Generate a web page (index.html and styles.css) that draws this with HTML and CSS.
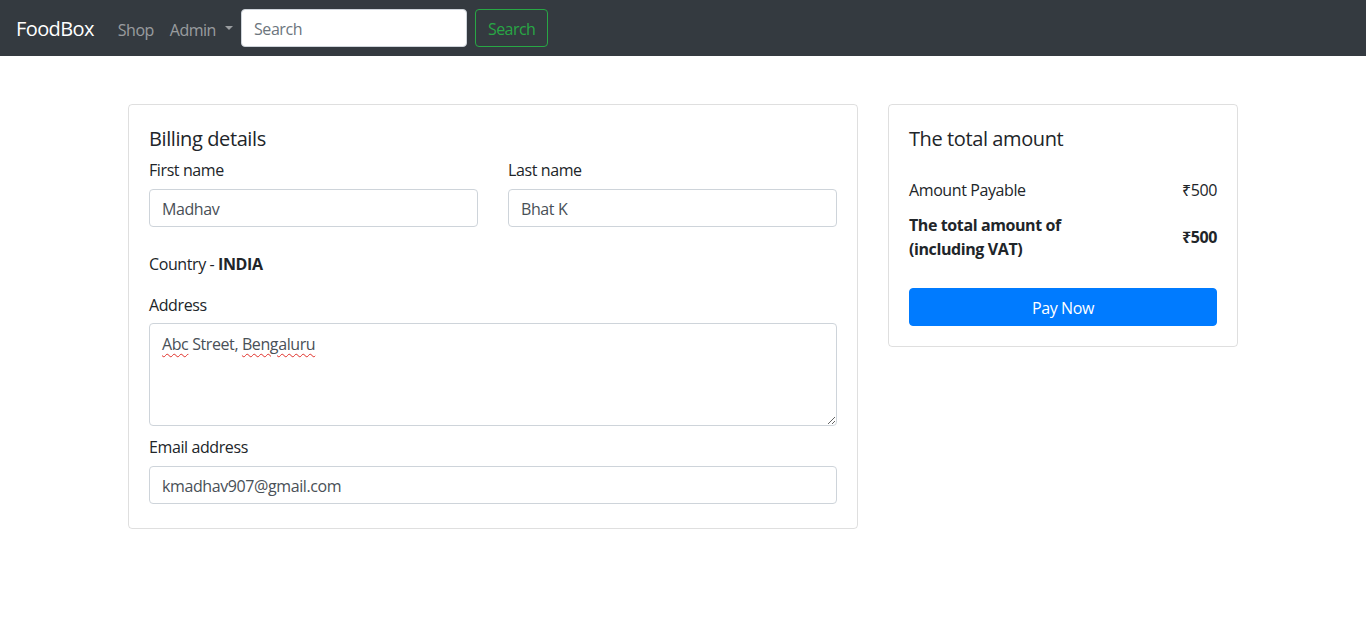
FILE: index.html
```html
<!DOCTYPE html>
<html lang="en">
<head>
<meta charset="utf-8">
<title>FoodBox - Checkout</title>
<link rel="stylesheet" href="styles.css">
</head>
<body>
<nav class="navbar">
  <a class="brand" href="#">FoodBox</a>
  <ul class="nav">
    <li><a class="nav-link" href="#">Shop</a></li>
    <li><a class="nav-link dropdown" href="#">Admin<span class="caret"></span></a></li>
  </ul>
  <form class="search">
    <input class="search-input" type="text" placeholder="Search">
    <button class="btn-outline" type="button">Search</button>
  </form>
</nav>

<main class="container">
  <section class="card billing">
    <h5 class="card-title">Billing details</h5>
    <div class="row">
      <div class="field">
        <label class="label">First name</label>
        <input class="control" type="text" value="Madhav">
      </div>
      <div class="field">
        <label class="label">Last name</label>
        <input class="control" type="text" value="Bhat K">
      </div>
    </div>
    <p class="country">Country - <b>INDIA</b></p>
    <label class="label">Address</label>
    <div class="control textarea"><span class="typo">Abc</span> Street, <span class="typo">Bengaluru</span></div>
    <label class="label email-label">Email address</label>
    <input class="control" type="text" value="kmadhav907@gmail.com">
  </section>

  <aside class="card summary">
    <h5 class="card-title">The total amount</h5>
    <div class="line">
      <span>Amount Payable</span>
      <span>₹500</span>
    </div>
    <div class="line total">
      <span>The total amount of<br>(including VAT)</span>
      <span>₹500</span>
    </div>
    <button class="btn-primary" type="button">Pay Now</button>
  </aside>
</main>
</body>
</html>
```

FILE: styles.css
```css
* { box-sizing: border-box; }

html, body {
  margin: 0;
  background: #fff;
  font-family: "Open Sans", "Noto Sans", sans-serif;
  font-size: 16px;
  line-height: 24px;
  color: #212529;
}

.navbar {
  display: flex;
  align-items: center;
  height: 56px;
  padding: 0 16px;
  background: #343a40;
}

.brand {
  color: #fff;
  text-decoration: none;
  font-size: 20px;
  letter-spacing: -0.6px;
  margin-right: 16px;
  padding-top: 2px;
}

.nav {
  display: flex;
  list-style: none;
  margin: 0;
  padding: 0;
}

.nav-link {
  display: flex;
  align-items: center;
  padding: 10px 8px 6px;
  color: rgba(255, 255, 255, 0.5);
  text-decoration: none;
  letter-spacing: -0.5px;
}

.caret {
  display: inline-block;
  margin-left: 9px;
  border-top: 4.5px solid rgba(255, 255, 255, 0.5);
  border-left: 4px solid transparent;
  border-right: 4px solid transparent;
  transform: translateY(-2px);
}

.search {
  display: flex;
  align-items: center;
}

.search-input {
  width: 226px;
  height: 38px;
  padding: 7px 12px 5px;
  font: inherit;
  letter-spacing: -0.4px;
  color: #495057;
  border: 1px solid #ced4da;
  border-radius: 4px;
  background: #fff;
  margin-right: 8px;
}
.search-input::placeholder { color: #6c757d; }

.btn-outline {
  height: 38px;
  padding: 7px 12px 5px;
  font: inherit;
  letter-spacing: -0.55px;
  color: #28a745;
  background: transparent;
  border: 1px solid #28a745;
  border-radius: 4px;
}

.container {
  display: flex;
  align-items: flex-start;
  gap: 30px;
  width: 1110px;
  margin: 48px auto 0;
}

.card {
  border: 1px solid rgba(0, 0, 0, 0.125);
  border-radius: 4px;
  padding: 20px;
  letter-spacing: -0.4px;
}

.billing {
  width: 730px;
  padding-bottom: 24px;
}

.summary {
  width: 350px;
}

.card-title {
  margin: 0 0 6px;
  font-size: 20px;
  font-weight: 400;
  line-height: 24px;
  padding-top: 2px;
}

.row {
  display: flex;
  gap: 30px;
}

.field {
  flex: 1;
  display: flex;
  flex-direction: column;
}

.label {
  display: block;
  padding-top: 1px;
  margin-bottom: 7px;
}

.control {
  display: block;
  width: 100%;
  height: 38px;
  padding: 7px 12px 5px;
  font: inherit;
  letter-spacing: -0.4px;
  color: #495057;
  border: 1px solid #ced4da;
  border-radius: 4px;
  background: #fff;
}

.country {
  margin: 25px 0 16px;
}

.textarea {
  height: 103px;
  padding-top: 8px;
  overflow: auto;
  resize: vertical;
  margin-top: -1px;
}

.typo {
  text-decoration: underline wavy #e0302a;
  text-decoration-thickness: 1px;
  text-underline-offset: 3px;
}

.email-label {
  margin-top: 8px;
  margin-bottom: 7px;
}

.line {
  display: flex;
  justify-content: space-between;
  align-items: center;
}

.line:first-of-type {
  margin-top: 27px;
}

.total {
  margin-top: 11px;
  font-weight: 700;
}

.btn-primary {
  display: block;
  width: 100%;
  height: 38px;
  margin-top: 27px;
  padding-top: 2px;
  font: inherit;
  letter-spacing: -0.4px;
  color: #fff;
  background: #007bff;
  border: 1px solid #007bff;
  border-radius: 4px;
}
```
